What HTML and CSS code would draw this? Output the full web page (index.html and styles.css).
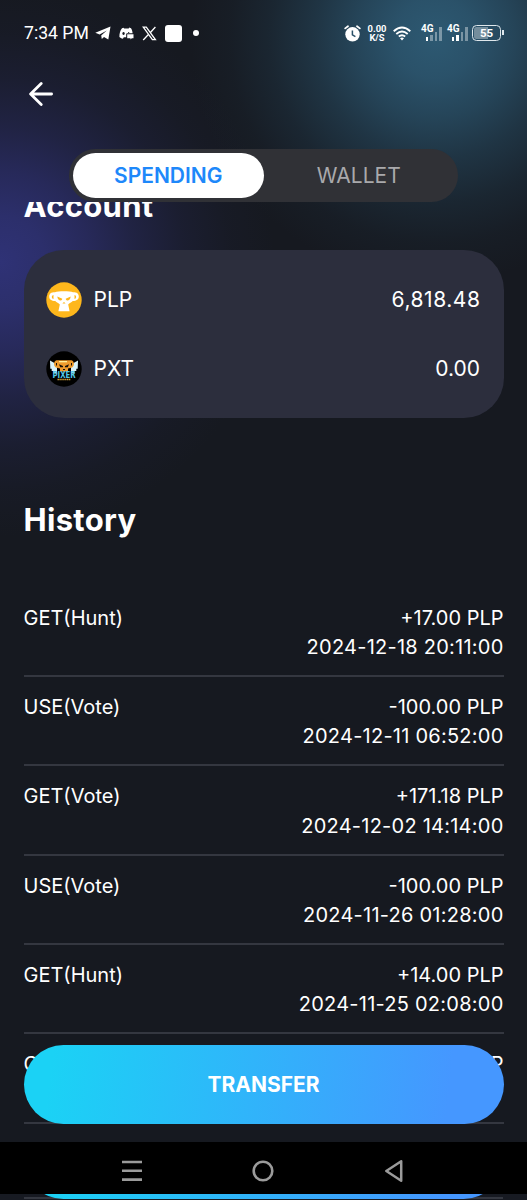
FILE: index.html
```html
<!DOCTYPE html>
<html lang="en">
<head>
  <meta charset="UTF-8">
  <title>Spending</title>
  <meta name="viewport" content="width=device-width, initial-scale=1.0">
  <link rel="stylesheet" href="styles.css">
</head>
<body>
  <div class="app">

    <!-- Status bar -->
    <div class="status">
      <span class="time">7:34 PM</span>
      <svg class="ic-telegram" width="16" height="14" viewBox="0 0 16 14"><path fill="#fff" d="M.3 6.800 15.500.5 13.300 13.500 9 11 6.800 13 6.200 9.600 11.800 4.600 4.600 8.600z"/></svg>
      <svg class="ic-discord" width="15" height="13" viewBox="0 0 15 13"><path fill="#fff" fill-rule="evenodd" d="M4.500.7 3 1.300C1.200 3.600.3 6.600.4 10c1.200 1 2.300 1.500 3.500 1.800l.9-1.600h2.400V7.500c0-.7.5-1.200 1.200-1.200h5.200C13.400 4.300 12.900 2.700 12 1.300L10.200.6 9.700 1.500H5.200zM4.500 5a1.200 1.500 0 1 0 .1 0zM9.200 5h1v1.500h-1z"/><path fill="#fff" d="M8.200 7.300h6.300v4h-1.700L11.500 12.600v-1.300H8.200z"/></svg>
      <svg class="ic-x" width="15" height="15" viewBox="0 0 15 15"><path fill="none" stroke="#fff" stroke-width="1.300" d="M1.300 1.200h3L13.400 13.600h-3zM13.400 1 8.200 6.800M6.400 8.500 1.200 14"/></svg>
      <span class="square"></span>
      <span class="dot"></span>

      <div class="status-right">
        <svg class="ic-alarm" width="17" height="17" viewBox="0 0 17 17"><circle cx="8.500" cy="9.300" r="7.200" fill="#fff"/><path fill="none" stroke="#fff" stroke-width="1.800" stroke-linecap="round" d="M1.200 3.400 4 1.200M15.800 3.400 13 1.200"/><path fill="none" stroke="#2a5068" stroke-width="1.500" d="M8.400 5.400v4.500l3 1.700"/></svg>
        <span class="speed"><b>0.00</b><b>K/S</b></span>
        <svg class="ic-wifi" width="18" height="15" viewBox="0 0 18 15"><path fill="none" stroke="#fff" stroke-width="1.900" d="M.7 5.200Q9-2 17.300 5.200M3.300 8Q9 3.200 14.700 8M5.800 10.600Q9 8 12.200 10.600"/><path fill="#fff" d="M7 12.200Q9 10.700 11 12.200L9 14.400z"/></svg>
        <span class="signal">
          <b>4G</b>
          <i class="on h1"></i><i class="h2"></i><i class="h3"></i><i class="h4"></i>
        </span>
        <span class="signal">
          <b>4G</b>
          <i class="on h1"></i><i class="on h2"></i><i class="h3"></i><i class="h4"></i>
        </span>
        <span class="battery">55</span>
      </div>
    </div>

    <!-- Header -->
    <div class="header">
      <svg width="24" height="24" viewBox="0 0 24 24"><path fill="none" stroke="#fff" stroke-width="2.800" stroke-linecap="round" stroke-linejoin="round" d="M12.200 1.600 1.600 12l10.600 10.400M2 12h20.600"/></svg>
    </div>
    <div class="tabs">
      <div class="tab active">SPENDING</div>
      <div class="tab">WALLET</div>
    </div>

    <!-- Content -->
    <div class="content">
      <h2 class="account-title">Account</h2>
      <div class="card">
        <div class="coin">
          <svg width="36" height="36" viewBox="0 0 36 36">
            <circle cx="18" cy="18" r="17.700" fill="#feb71c"/>
            <path fill="#fff" d="M9 10.200C12 8.800 24 8.800 27 10.200c4 0 5.800 1.500 5.800 4.300s-2.200 4.500-6 4.500c-1.500 1.400-3.400 2-4.600 3.600l1.400 6.600H12.400l1.400-6.600C12.600 21 10.700 20.400 9.200 19c-3.800 0-6-1.700-6-4.500S5 10.200 9 10.200z"/>
            <path fill="#feb71c" d="M7.500 13c-2.200.3-2.200 3.600 0 3.900zM28.500 13c2.200.3 2.200 3.600 0 3.900zM11.300 14.500l5 2.300c-.4 2.700-4.600 2.500-5-2.300zM24.700 14.500l-5 2.300c.4 2.700 4.600 2.500 5-2.300zM18 20l1.600 1.600h-3.200z"/>
          </svg>
          <span>PLP</span>
          <span class="amount wide">6,818.48</span>
        </div>
        <div class="coin">
          <svg width="36" height="36" viewBox="0 0 36 36">
            <circle cx="18" cy="18" r="17.700" fill="#000"/>
            <path fill="#d8f3fa" d="M4 9.500l7 4v9H7.500V20H5.700v-2.200H4.300zM32 9.500l-7 4v9h3.500V20h1.800v-2.200h1.400z"/>
            <path fill="#ed9b2d" d="M10.500 9.300h15c3 .6 3.300 5.600.6 7.300L22 17.500v3h-8v-3l-4.100-.9c-2.700-1.700-2.400-6.700.6-7.300z"/>
            <path fill="#fff09a" d="M13 10h8v1.300h-8z"/>
            <path fill="#16120c" d="M10 12h1v2.500h-1zM25 12h1v2.500h-1zM13 13.300l4 1.600v1.400h-2.800zM23 13.300l-4 1.600v1.400h2.800zM17 18h2v1h-2z"/>
            <text class="pixer" x="18" y="26.800" text-anchor="middle" textLength="23" lengthAdjust="spacingAndGlyphs">PIXER</text>
            <path stroke="#d8a33a" stroke-width="1.500" stroke-dasharray="1.400 .5" d="M11.500 28.400h13"/>
          </svg>
          <span>PXT</span>
          <span class="amount">0.00</span>
        </div>
      </div>

      <h2 class="history-title">History</h2>
      <div class="row">
        <div>GET(Hunt)</div>
        <div class="right">+17.00 PLP<div class="date">2024-12-18 20:11:00</div></div>
      </div>
      <div class="row">
        <div>USE(Vote)</div>
        <div class="right">-100.00 PLP<div class="date">2024-12-11 06:52:00</div></div>
      </div>
      <div class="row">
        <div>GET(Vote)</div>
        <div class="right">+171.18 PLP<div class="date">2024-12-02 14:14:00</div></div>
      </div>
      <div class="row">
        <div>USE(Vote)</div>
        <div class="right">-100.00 PLP<div class="date">2024-11-26 01:28:00</div></div>
      </div>
      <div class="row">
        <div>GET(Hunt)</div>
        <div class="right">+14.00 PLP<div class="date">2024-11-25 02:08:00</div></div>
      </div>
      <div class="row">
        <div>G</div>
        <div class="right">P</div>
      </div>

      <div class="transfer">TRANSFER</div>
    </div>

    <!-- Android navigation -->
    <div class="navbar">
      <svg width="20" height="22" viewBox="0 0 20 22"><path stroke="#9b9b9b" stroke-width="2.600" d="M0 2h20M0 10.800h20M0 19.600h20"/></svg>
      <svg width="22" height="22" viewBox="0 0 22 22"><circle cx="11" cy="11" r="9.300" fill="none" stroke="#9b9b9b" stroke-width="2.600"/></svg>
      <svg width="20" height="22" viewBox="0 0 20 22"><path fill="none" stroke="#9b9b9b" stroke-width="2.500" stroke-linejoin="round" d="M17.200 1.300v19.400L2.300 11z"/></svg>
    </div>
    <div class="under"><div class="under-button"></div></div>
  </div>
</body>
</html>
```

FILE: styles.css
```css
* {
  box-sizing: border-box;
}

body {
  margin: 0;
  background: #161920;
  color: #fff;
  font-family: Inter, "Liberation Sans", sans-serif;
}

svg {
  display: block;
  flex: none;
}

.app {
  width: 527px;
  height: 1200px;
  display: flex;
  flex-direction: column;
  overflow: hidden;
  background:
    radial-gradient(circle at 435px 38px, #2d5972 0, rgba(44, 86, 111, 0.93) 40px, rgba(42, 82, 106, 0.76) 80px, rgba(40, 78, 101, 0.52) 120px, rgba(38, 74, 96, 0.27) 165px, rgba(38, 74, 96, 0.09) 205px, rgba(38, 74, 96, 0) 245px),
    radial-gradient(circle at 0 262px, #2f3276 0, rgba(46, 49, 114, 0.92) 45px, rgba(45, 47, 110, 0.74) 90px, rgba(44, 46, 106, 0.48) 135px, rgba(42, 44, 100, 0.24) 185px, rgba(42, 44, 100, 0.08) 230px, rgba(42, 44, 100, 0) 275px),
    #161920;
}

/* status bar */
.status {
  height: 66px;
  padding: 0 23px 0 24px;
  display: flex;
  align-items: center;
  font-family: Roboto, sans-serif;
}

.time {
  width: 65px;
  font-size: 17.600px;
  white-space: nowrap;
}

.ic-telegram {
  margin-left: 6px;
}

.ic-discord {
  margin-left: 8px;
}

.ic-x {
  margin-left: 8px;
}

.square {
  width: 17px;
  height: 17px;
  margin-left: 8px;
  border-radius: 3px;
  background: #fff;
}

.dot {
  width: 6px;
  height: 6px;
  margin-left: 11px;
  border-radius: 50%;
  background: #fff;
}

.status-right {
  margin-left: auto;
  display: flex;
  align-items: center;
}

.speed {
  width: 20px;
  margin-left: 6px;
  display: flex;
  flex-direction: column;
  align-items: center;
  font-size: 9.400px;
  line-height: 9.500px;
}

.ic-wifi {
  margin-left: 6px;
}

.signal {
  position: relative;
  width: 21px;
  height: 16px;
  margin-left: 10px;
  padding-left: 5px;
  display: flex;
  align-items: flex-end;
  gap: 2px;
}

.signal + .signal {
  margin-left: 5px;
}

.signal b {
  position: absolute;
  left: 0;
  top: -1px;
  font-size: 10px;
  line-height: 10px;
}

.signal i {
  width: 2.400px;
  flex: none;
  background: rgba(255, 255, 255, 0.38);
}

.signal .on {
  background: #fff;
}

.h1 { height: 4px; }
.h2 { height: 6px; }
.h3 { height: 9px; }
.h4 { height: 14px; }

.battery {
  position: relative;
  width: 29px;
  height: 16px;
  margin: 0 3px 0 4px;
  border: 1.500px solid #dfe7ec;
  border-radius: 4.500px;
  background: linear-gradient(90deg, #748d9c 55%, transparent 55%) content-box;
  padding: 1px;
  font-size: 11.500px;
  font-weight: bold;
  line-height: 12px;
  text-align: center;
}

.battery::after {
  content: "";
  position: absolute;
  right: -4px;
  top: 4px;
  width: 2px;
  height: 5px;
  background: #dfe7ec;
}

/* header */
.header {
  height: 83px;
  padding: 16px 29px;
}

.tabs {
  width: 389px;
  height: 53px;
  margin-left: 69px;
  padding: 4px;
  display: flex;
  flex: none;
  border-radius: 27px;
  background: #303136;
}

.tab {
  flex: 1;
  display: flex;
  align-items: center;
  justify-content: center;
  border-radius: 23px;
  color: #a9a9ac;
  font-size: 21px;
}

.tab.active {
  background: #fff;
  color: #1e88fa;
  font-weight: 600;
}

/* content */
.content {
  position: relative;
  height: 940px;
  padding: 0 23.500px;
  overflow: hidden;
}

h2 {
  margin: 0;
  font-size: 31px;
  font-weight: 700;
  line-height: 40px;
  letter-spacing: 0.300px;
}

.account-title {
  margin-top: -16px;
}

.card {
  height: 168px;
  margin-top: 24px;
  padding: 15px 23.500px 15px 22.500px;
  border-radius: 40px;
  background: #2c2e3d;
}

.coin {
  height: 69px;
  display: flex;
  align-items: center;
  font-size: 21px;
}

.coin svg {
  margin-right: 11.500px;
}

.amount {
  margin-left: auto;
}

.wide {
  margin-right: -0.500px;
  letter-spacing: 0.550px;
}

.pixer {
  fill: #51c8e8;
  font: bold 9.500px "DejaVu Sans", sans-serif;
}

.history-title {
  margin: 82px 0 47.800px;
}

.row {
  height: 89.300px;
  padding-top: 16px;
  display: flex;
  justify-content: space-between;
  border-bottom: 2px solid #343740;
  font-size: 20px;
  line-height: 29.300px;
}

.right {
  text-align: right;
}

.date {
  letter-spacing: 0.240px;
}

.transfer {
  position: absolute;
  left: 23.500px;
  right: 23.500px;
  bottom: 18px;
  height: 79px;
  display: flex;
  align-items: center;
  justify-content: center;
  border-radius: 40px;
  background: linear-gradient(97deg, #1bd2f5 6%, #4597ff 88%);
  font-size: 21px;
  font-weight: 700;
}

/* android navigation */
.navbar {
  height: 52px;
  padding: 5px 123px 0 122px;
  display: flex;
  flex: none;
  align-items: center;
  justify-content: space-between;
  background: #000;
}

.under {
  height: 6px;
  padding: 0 24px;
  display: flex;
  align-items: flex-end;
  overflow: hidden;
  background: linear-gradient(#171a22 3px, #343740 3px, #343740 5px, #171a22 5px) content-box, #171a22;
}

.under-button {
  width: 100%;
  height: 79px;
  flex: none;
  margin-bottom: 1.500px;
  border-radius: 40px;
  background: linear-gradient(97deg, #1bd2f5 6%, #4597ff 88%);
}
```
